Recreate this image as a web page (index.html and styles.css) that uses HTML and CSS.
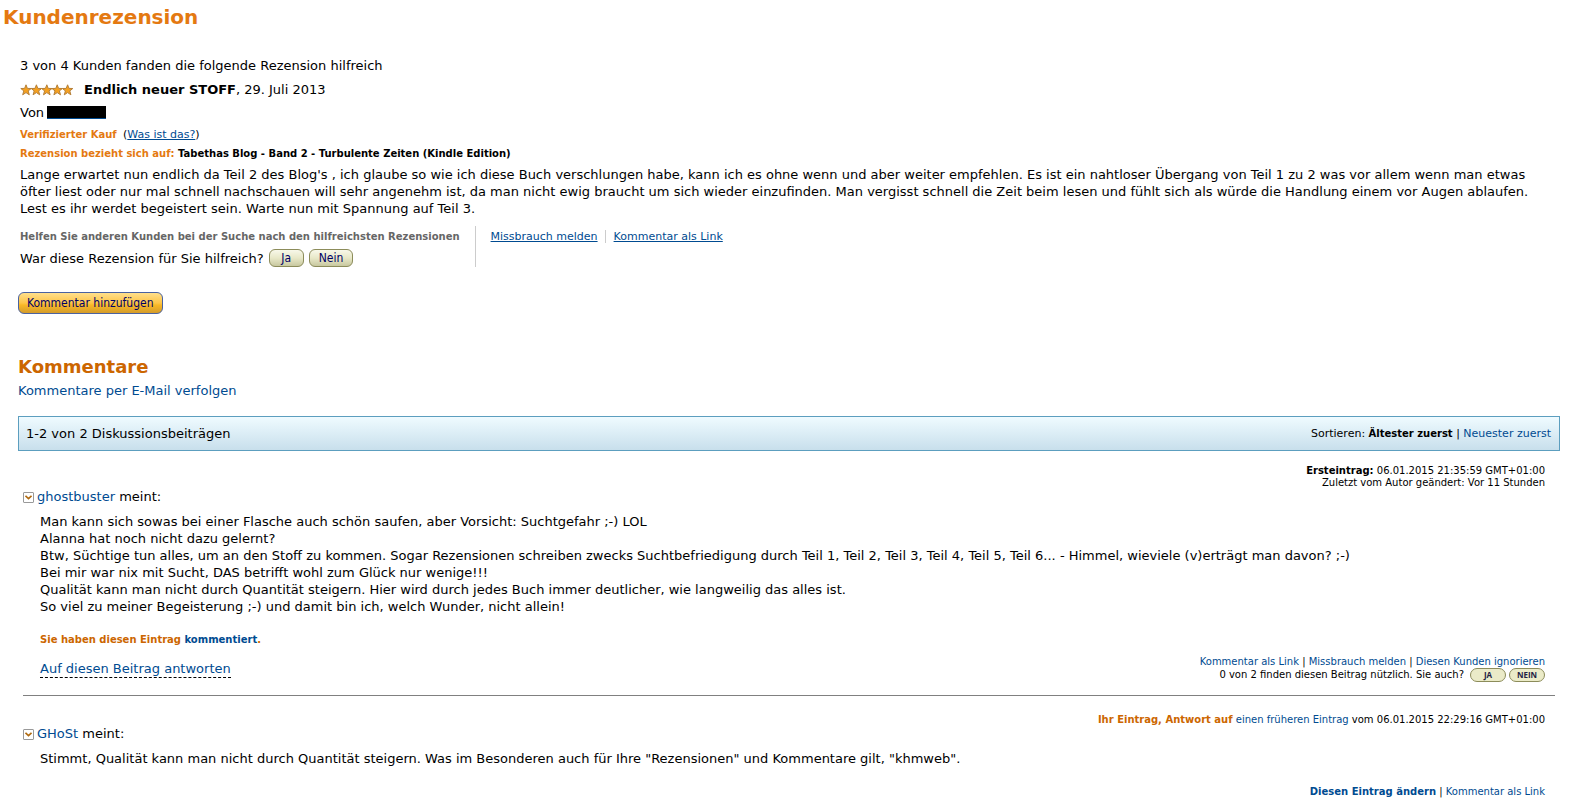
FILE: index.html
```
<!DOCTYPE html>
<html lang="de">
<head>
  <meta charset="utf-8">
  <title>Kundenrezension</title>
  <link rel="stylesheet" href="styles.css">
</head>
<body>
  <h1>Kundenrezension</h1>

  <div class="review">
    <p class="helpful">3 von 4 Kunden fanden die folgende Rezension hilfreich</p>
    <div class="rating">
      <svg class="stars" width="54" height="12" viewBox="0 0 54 12" role="img" aria-label="5 von 5 Sternen">
        <defs>
          <path id="star" d="M6 .8 7.4 4.4 11.2 4.5 8.2 6.9 9.3 10.8 6 8.6 2.7 10.8 3.8 6.9 .8 4.5 4.6 4.4Z" fill="#f5a01e" stroke="#b5803a" stroke-width="1"/>
        </defs>
        <use href="#star"/>
        <use href="#star" x="10.4"/>
        <use href="#star" x="20.8"/>
        <use href="#star" x="31.2"/>
        <use href="#star" x="41.6"/>
      </svg>
      <span><b>Endlich neuer STOFF</b>, 29. Juli 2013</span>
    </div>
    <p class="by">Von <a class="redacted" href="#" aria-label="Profil"></a></p>
    <p class="small verified"><b class="orange">Verifizierter Kauf</b> &nbsp;<span class="medium">(<a href="#">Was ist das?</a>)</span></p>
    <p class="small product"><b><span class="orange">Rezension bezieht sich auf:</span> Tabethas Blog - Band 2 - Turbulente Zeiten (Kindle Edition)</b></p>
    <p class="review-text">Lange erwartet nun endlich da Teil 2 des Blog's , ich glaube so wie ich diese Buch verschlungen habe, kann ich es ohne wenn und aber weiter empfehlen. Es ist ein nahtloser Übergang von Teil 1 zu 2 was vor allem wenn man etwas öfter liest oder nur mal schnell nachschauen will sehr angenehm ist, da man nicht ewig braucht um sich wieder einzufinden. Man vergisst schnell die Zeit beim lesen und fühlt sich als würde die Handlung einem vor Augen ablaufen. Lest es ihr werdet begeistert sein. Warte nun mit Spannung auf Teil 3.</p>

    <div class="voting">
      <div class="vote">
        <p class="small gray"><b>Helfen Sie anderen Kunden bei der Suche nach den hilfreichsten Rezensionen</b></p>
        <div class="vote-row">
          <span>War diese Rezension für Sie hilfreich?</span>
          <button class="btn-vote" type="button">Ja</button>
          <button class="btn-vote" type="button">Nein</button>
        </div>
      </div>
      <div class="medium vote-links">
        <a href="#">Missbrauch melden</a>
        <a href="#">Kommentar als Link</a>
      </div>
    </div>
  </div>

  <div class="comments">
    <button class="btn-comment" type="button">Kommentar hinzufügen</button>

    <h2>Kommentare</h2>
    <a class="follow" href="#">Kommentare per E-Mail verfolgen</a>

    <div class="bar">
      <span>1-2 von 2 Diskussionsbeiträgen</span>
      <span class="medium">Sortieren: <b class="small">Ältester zuerst</b> | <a href="#">Neuester zuerst</a></span>
    </div>

    <div class="post">
      <div class="meta"><b>Ersteintrag:</b> 06.01.2015 21:35:59 GMT+01:00<br>Zuletzt vom Autor geändert: Vor 11 Stunden</div>
      <div class="author">
        <button class="toggle" type="button" aria-label="Einklappen"><svg width="7" height="5" viewBox="0 0 7 5"><path d="M.5 .8 3.5 3.6 6.5 .8" fill="none" stroke="#b06a10" stroke-width="1.6"/></svg></button>
        <span><a href="#">ghostbuster</a> meint:</span>
      </div>
      <p class="text">Man kann sich sowas bei einer Flasche auch schön saufen, aber Vorsicht: Suchtgefahr ;-) LOL<br>
        Alanna hat noch nicht dazu gelernt?<br>
        Btw, Süchtige tun alles, um an den Stoff zu kommen. Sogar Rezensionen schreiben zwecks Suchtbefriedigung durch Teil 1, Teil 2, Teil 3, Teil 4, Teil 5, Teil 6... - Himmel, wieviele (v)erträgt man davon? ;-)<br>
        Bei mir war nix mit Sucht, DAS betrifft wohl zum Glück nur wenige!!!<br>
        Qualität kann man nicht durch Quantität steigern. Hier wird durch jedes Buch immer deutlicher, wie langweilig das alles ist.<br>
        So viel zu meiner Begeisterung ;-) und damit bin ich, welch Wunder, nicht allein!</p>
      <p class="small commented"><b>Sie haben diesen Eintrag <a href="#">kommentiert</a>.</b></p>
      <div class="post-foot">
        <a class="reply" href="#">Auf diesen Beitrag antworten</a>
        <div class="actions">
          <div><a href="#">Kommentar als Link</a> | <a href="#">Missbrauch melden</a> | <a href="#">Diesen Kunden ignorieren</a></div>
          <div class="useful">
            <span>0 von 2 finden diesen Beitrag nützlich. Sie auch?</span>
            <button class="btn-mini" type="button">JA</button>
            <button class="btn-mini" type="button">NEIN</button>
          </div>
        </div>
      </div>
    </div>

    <div class="post">
      <div class="meta"><b class="dark-orange">Ihr Eintrag, Antwort auf</b> <a href="#">einen früheren Eintrag</a> vom 06.01.2015 22:29:16 GMT+01:00</div>
      <div class="author">
        <button class="toggle" type="button" aria-label="Einklappen"><svg width="7" height="5" viewBox="0 0 7 5"><path d="M.5 .8 3.5 3.6 6.5 .8" fill="none" stroke="#b06a10" stroke-width="1.6"/></svg></button>
        <span><a href="#">GHoSt</a> meint:</span>
      </div>
      <p class="text">Stimmt, Qualität kann man nicht durch Quantität steigern. Was im Besonderen auch für Ihre "Rezensionen" und Kommentare gilt, "khmweb".</p>
      <div class="post-foot own">
        <div class="actions"><a href="#"><b>Diesen Eintrag ändern</b></a> | <a href="#">Kommentar als Link</a></div>
      </div>
    </div>
  </div>
</body>
</html>
```

FILE: styles.css
```
body {
  margin: 0;
  padding-top: 5px;
  background: #fff;
  color: #000;
  font-family: Verdana, "DejaVu Sans", sans-serif;
  font-size: 13px;
  line-height: 17px;
}

h1, h2, p {
  margin: 0;
}

h1 {
  margin-left: 3px;
  color: #e47911;
  font-size: 20px;
  line-height: 24px;
}

a {
  color: #004b91;
  text-decoration: none;
}

button {
  padding: 0;
  cursor: pointer;
}

.small {
  font-size: 10px;
  line-height: 13px;
}

.medium {
  font-size: 11px;
  line-height: 13px;
}

.orange {
  color: #e47911;
}

.dark-orange {
  color: #c60;
}

.gray {
  color: #666;
}

/* Review */
.review {
  margin: 28px 20px 0;
}

.review .medium a {
  text-decoration: underline;
}

.rating {
  display: flex;
  align-items: center;
  gap: 10px;
  margin-top: 7px;
}

.by {
  display: flex;
  align-items: center;
  gap: 3px;
  margin-top: 6px;
}

.redacted {
  width: 59px;
  height: 12px;
  background: #000;
  border-bottom: 1px solid #004b91;
}

.verified {
  margin-top: 7px;
}

.product {
  margin-top: 6px;
}

.review-text {
  margin-top: 6px;
}

.voting {
  display: flex;
  margin-top: 9px;
}

.vote {
  padding: 4px 15px 0 0;
  border-right: 1px solid #ccc;
}

.vote-row {
  display: flex;
  align-items: center;
  gap: 5px;
  margin-top: 6px;
}

.vote-links {
  display: flex;
  align-self: flex-start;
  margin-top: 4px;
  padding-left: 15px;
}

.vote-links a + a {
  margin-left: 7px;
  padding-left: 8px;
  border-left: 1px solid #ccc;
}

.btn-vote {
  min-width: 35px;
  height: 18px;
  padding: 0 9px;
  border: 1px solid #8c8c5a;
  border-radius: 6px;
  background: linear-gradient(#f8f8ea, #e8e8c8 50%, #c8c8a0);
  color: #006;
  font: 12px/14px "DejaVu Sans Condensed", "Open Sans", sans-serif;
}

.btn-comment {
  display: block;
  height: 22px;
  margin-top: 25px;
  padding: 0 8px;
  border: 1px solid #4a62a0;
  border-radius: 6px;
  background: linear-gradient(#ffdf8c, #fdc548 50%, #f9b826 60%, #d39c2c);
  color: #006;
  font: 12px/18px "DejaVu Sans Condensed", "Open Sans", sans-serif;
}

/* Comments */
.comments {
  margin: 0 15px 0 18px;
}

h2 {
  margin-top: 42px;
  color: #c60;
  font-size: 18px;
  line-height: 22px;
}

.follow {
  display: block;
  margin-top: 4px;
}

.bar {
  display: flex;
  justify-content: space-between;
  align-items: center;
  margin-top: 17px;
  padding: 8px 8px 8px 7px;
  border: 1px solid #5c9ebf;
  background: linear-gradient(#effbff, #c8dfec);
}

.post {
  display: flow-root;
  margin: 0 5px;
  padding-top: 14px;
}

.post + .post {
  padding-top: 18px;
  border-top: 1px solid #808080;
}

.meta, .actions {
  font-size: 10px;
  line-height: 12px;
  text-align: right;
}

.meta {
  padding-right: 10px;
}

.author {
  display: flex;
  align-items: center;
  gap: 3px;
  line-height: 16px;
}

.toggle {
  display: flex;
  align-items: center;
  justify-content: center;
  width: 11px;
  height: 11px;
  border: 1px solid #999;
  border-radius: 1px;
  background: #fff;
}

.text {
  margin: 8px 0 0 17px;
}

.commented {
  margin: 18px 0 0 17px;
  color: #c60;
}

.post-foot {
  display: flex;
  justify-content: space-between;
  align-items: center;
  margin: 10px 10px 13px 17px;
}

.own {
  justify-content: flex-end;
  margin-top: 19px;
  margin-bottom: 0;
}

.reply {
  border-bottom: 1px dashed #000;
}

.useful {
  display: flex;
  justify-content: flex-end;
  align-items: center;
  gap: 3px;
}

.useful span {
  margin-right: 3px;
}

.btn-mini {
  width: 36px;
  height: 14px;
  border: 1px solid #8c8c5a;
  border-radius: 7px;
  background: #ebebc8;
  color: #224;
  font: bold 8px/12px "Open Sans", sans-serif;
}
```
